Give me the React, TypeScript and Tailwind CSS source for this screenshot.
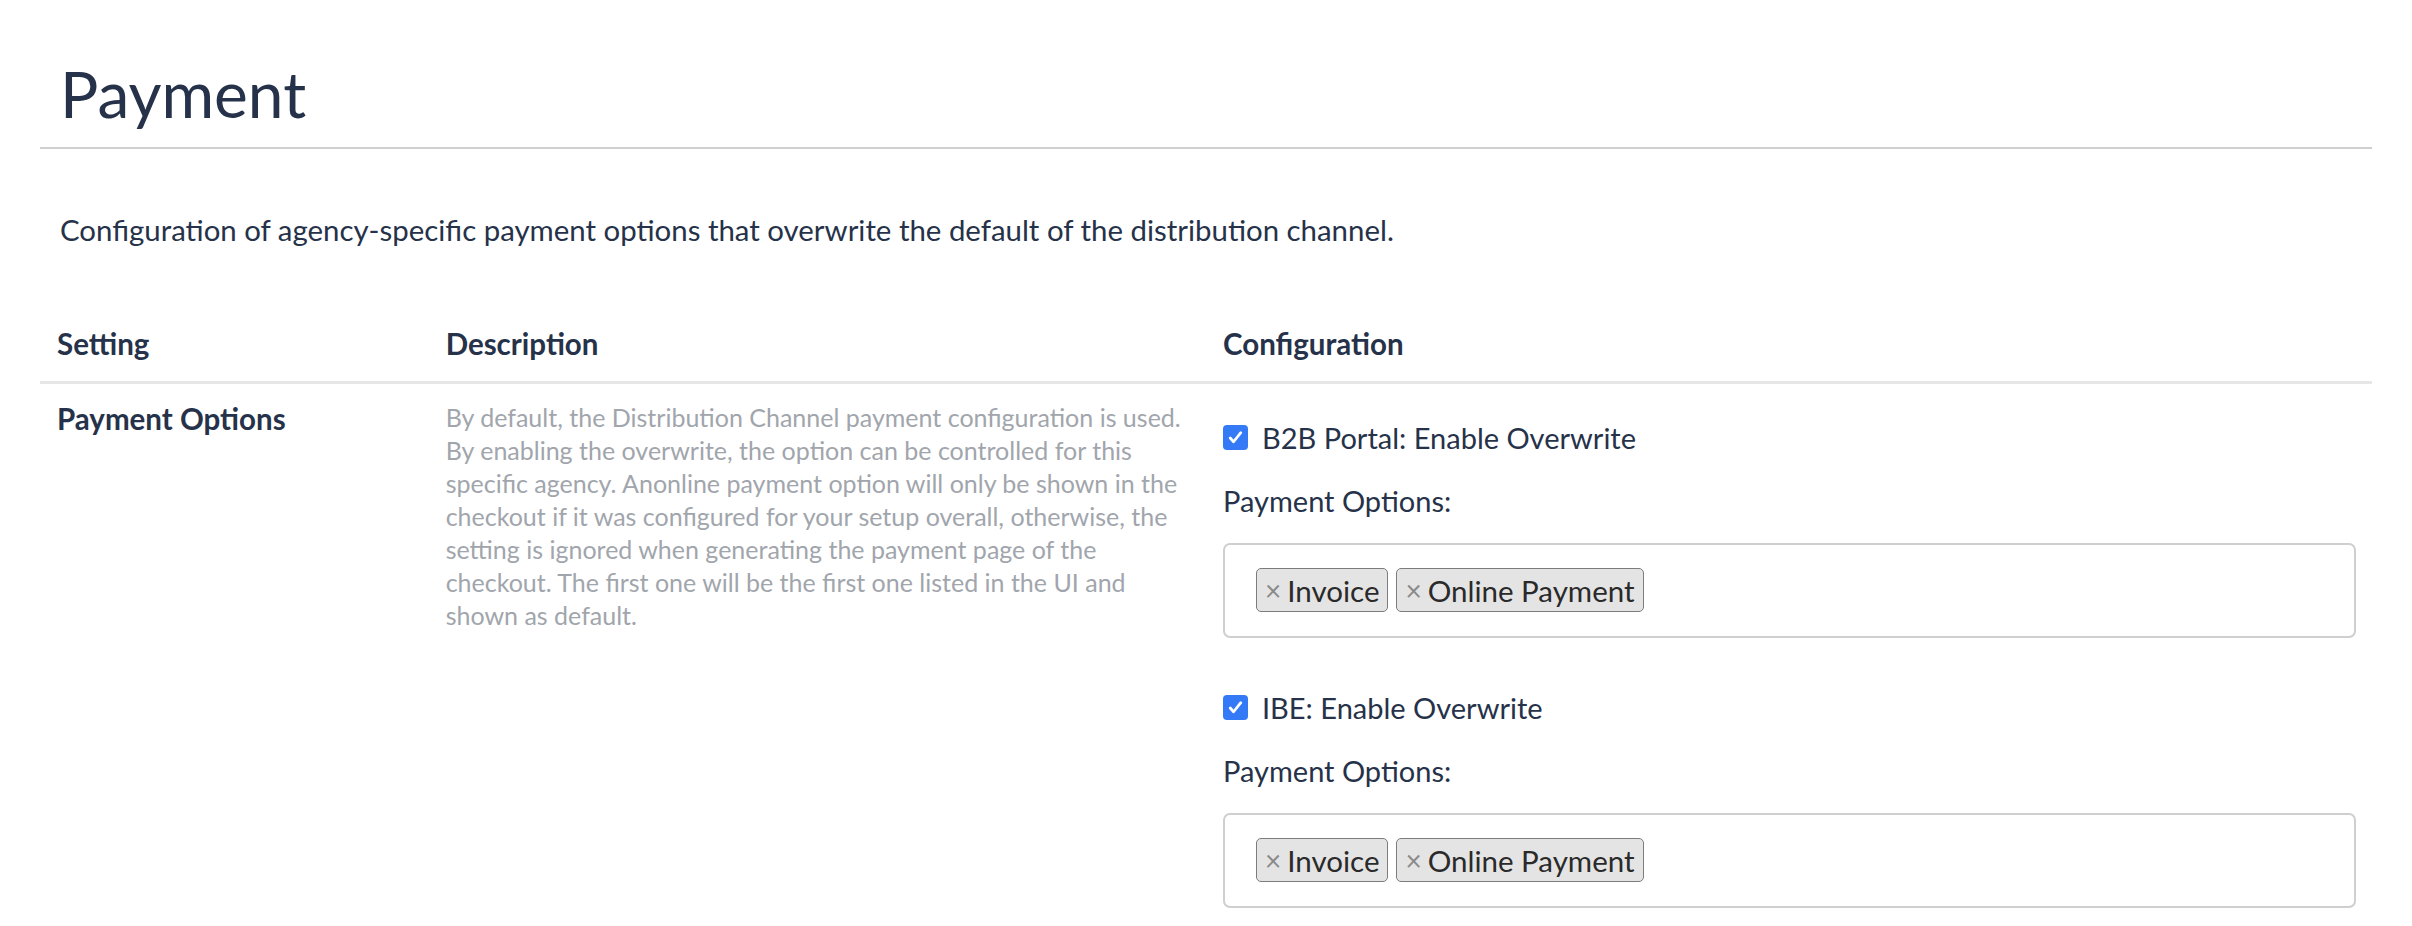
import React from "react";

const font = { fontFamily: "Lato, 'Noto Sans', sans-serif" };

function Check() {
  return (
    <span className="flex h-[25px] w-[25px] shrink-0 items-center justify-center rounded-[4px] bg-[#3479f6]">
      <svg width="17" height="17" viewBox="0 0 16 16" fill="none">
        <path d="M3 8.5l3.2 3.5L13 3.5" stroke="white" strokeWidth="2.6" strokeLinecap="round" strokeLinejoin="round" />
      </svg>
    </span>
  );
}

function Tag({ label }: { label: string }) {
  return (
    <span className="flex h-[44px] items-center gap-[6px] rounded-[5px] border-[1.5px] border-[#7c7c7c] bg-[#e4e4e4] pl-[8px] pr-[8px] text-[29.5px] leading-none text-[#2a2a2a]">
      <span className="text-[28px] text-[#8a8a8a]">×</span>
      <span>{label}</span>
    </span>
  );
}

function Block({ title }: { title: string }) {
  return (
    <div className="flex flex-col">
      <label className="flex h-[36px] items-center gap-[14px] text-[29px] text-[#263249]">
        <Check />
        <span>{title}</span>
      </label>
      <div className="mt-[27px] h-[36px] text-[29px] leading-[36px] text-[#263249]">Payment Options:</div>
      <div className="mt-[24px] flex h-[95px] items-center gap-[8px] rounded-[7px] border-2 border-[#cfcfcf] px-[31px]">
        <Tag label="Invoice" />
        <Tag label="Online Payment" />
      </div>
    </div>
  );
}

export default function App() {
  return (
    <div className="min-h-screen bg-white px-[40px] text-[#263249]" style={font}>
      <div className="border-b-2 border-[#cfcfcf] px-[20px] pb-[14px] pt-[56px]">
        <h1 className="text-[64px] leading-[1.2] text-[#263249]">Payment</h1>
      </div>
      <p className="px-[20px] pt-[60px] text-[29.4px] leading-[1.4]">
        Configuration of agency-specific payment options that overwrite the default of the distribution channel.
      </p>
      <div className="mt-[74px] grid grid-cols-[1fr_2fr_3fr] border-b-[3px] border-[#e6e6e6] pb-[17px] text-[29.5px] leading-[40px] font-bold">
        <div className="px-[17px]">Setting</div>
        <div className="px-[17px]">Description</div>
        <div className="px-[17px]">Configuration</div>
      </div>
      <div className="grid grid-cols-[1fr_2fr_3fr] pt-[15px]">
        <div className="px-[17px] text-[29.5px] leading-[40px] font-bold">Payment Options</div>
        <div className="px-[17px] pt-[2px] text-[25px] leading-[33px] text-[#a1a5ac]">
          By default, the Distribution Channel payment configuration is used.
          <br />
          By enabling the overwrite, the option can be controlled for this
          <br />
          specific agency. Anonline payment option will only be shown in the
          <br />
          checkout if it was configured for your setup overall, otherwise, the
          <br />
          setting is ignored when generating the payment page of the
          <br />
          checkout. The first one will be the first one listed in the UI and
          <br />
          shown as default.
        </div>
        <div className="flex flex-col gap-[52px] pl-[17px] pr-[16px] pt-[21px]">
          <Block title="B2B Portal: Enable Overwrite" />
          <Block title="IBE: Enable Overwrite" />
        </div>
      </div>
    </div>
  );
}
